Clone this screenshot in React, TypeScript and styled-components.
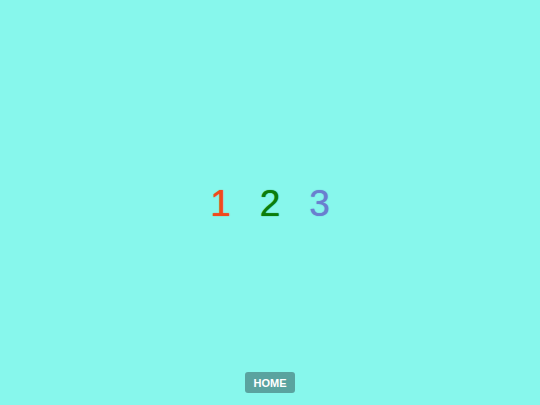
import React from "react";
import styled, { createGlobalStyle } from "styled-components";

const Global = createGlobalStyle`
  html, body { margin: 0; padding: 0; background: #87f7ec; }
  body { font-family: "Liberation Sans", Arial, sans-serif; }
`;

const Page = styled.div`
  width: 540px;
  height: 405px;
  display: flex;
  flex-direction: column;
  align-items: center;
  background: #87f7ec;
`;

const Center = styled.div`
  flex: 1;
  display: flex;
  align-items: center;
  justify-content: center;
  padding-top: 34px;
`;

const Digits = styled.div`
  display: flex;
  gap: 29px;
`;

const Digit = styled.span<{ $color: string }>`
  font-size: 37px;
  line-height: 1;
  color: ${(p) => p.$color};
  text-shadow: 0 0 1px ${(p) => p.$color};
`;

const HomeButton = styled.button`
  margin-bottom: 12px;
  width: 50px;
  height: 21px;
  border: none;
  border-radius: 3px;
  background: #5aa39f;
  color: #ffffff;
  font-family: "Liberation Sans", Arial, sans-serif;
  font-weight: bold;
  font-size: 11px;
  padding: 0;
  cursor: pointer;
`;

export default function App() {
  return (
    <>
      <Global />
      <Page>
        <Center>
          <Digits>
            <Digit $color="#f14a1c">1</Digit>
            <Digit $color="#0b7d0b">2</Digit>
            <Digit $color="#6a7fcf">3</Digit>
          </Digits>
        </Center>
        <HomeButton>HOME</HomeButton>
      </Page>
    </>
  );
}
